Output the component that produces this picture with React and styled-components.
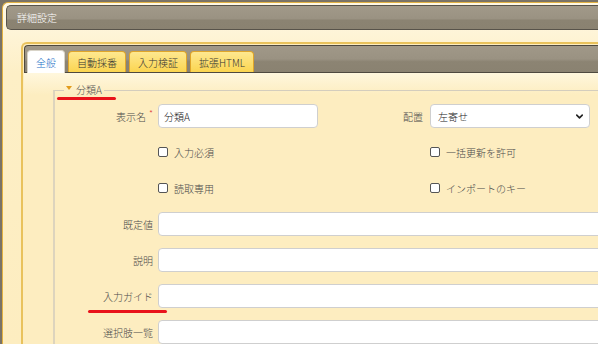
import React from 'react';
import styled, { createGlobalStyle } from 'styled-components';
import { ChevronDown } from 'lucide-react';

const GlobalStyle = createGlobalStyle`
  html, body {
    margin: 0;
    padding: 0;
    background: #7a7366;
    font-family: "Noto Sans CJK JP", "Noto Sans", sans-serif;
    font-weight: 300;
  }
`;

const App = () => {
    return (
        <>
            <GlobalStyle />
            <Dialog>
                <TitleBar>詳細設定</TitleBar>
                <Content>
                    <Panel>
                        <TabBar>
                            <Tab $active>全般</Tab>
                            <Tab>自動採番</Tab>
                            <Tab>入力検証</Tab>
                            <Tab>拡張HTML</Tab>
                        </TabBar>
                        <PanelBody>
                            <Group>
                                <Legend>
                                    <Arrow />
                                    分類A
                                    <RedMark $left={-7} $right={-12} $bottom={-3} />
                                </Legend>
                                <FormGrid>
                                    <Label>
                                        表示名<Required>*</Required>
                                    </Label>
                                    <Input defaultValue="分類A" />
                                    <Label $wide>配置</Label>
                                    <SelectBox>
                                        左寄せ
                                        <ChevronDown size={11} strokeWidth={3.5} color="#222" />
                                    </SelectBox>
                                    <Spacer />

                                    <Spacer />
                                    <Check>
                                        <Box />
                                        入力必須
                                    </Check>
                                    <Spacer />
                                    <Check>
                                        <Box />
                                        一括更新を許可
                                    </Check>
                                    <Spacer />

                                    <Spacer />
                                    <Check>
                                        <Box />
                                        読取専用
                                    </Check>
                                    <Spacer />
                                    <Check>
                                        <Box />
                                        インポートのキー
                                    </Check>
                                    <Spacer />

                                    <Label>既定値</Label>
                                    <Input $full />

                                    <Label>説明</Label>
                                    <Input $full />

                                    <Label>
                                        <Marked>
                                            入力ガイド
                                            <RedMark $left={-15} $right={-14} $bottom={-9} />
                                        </Marked>
                                    </Label>
                                    <Input $full />

                                    <Label>選択肢一覧</Label>
                                    <Input $full />
                                </FormGrid>
                            </Group>
                        </PanelBody>
                    </Panel>
                </Content>
            </Dialog>
        </>
    );
};

export default App;

// the dialog is cut off by the window on the right and at the bottom
const Dialog = styled.div`
    box-sizing: border-box;
    width: 596px;
    height: 342px;
    overflow: hidden;
    margin: 2px 0 0 2px;
    padding: 2px 0 0 3px;
    border: 1px solid #e2b142;
    border-right: none;
    border-bottom: none;
    border-radius: 6px 0 0 0;
    background: linear-gradient(#fff8e4 0, #fdefc6 70px, #fdedc0 100%);
`;

const TitleBar = styled.div`
    width: 700px;
    height: 23px;
    display: flex;
    align-items: center;
    padding-left: 10px;
    border: 1px solid #58534a;
    border-right: none;
    border-radius: 5px 0 0 5px;
    background: linear-gradient(#a19989 0%, #9a9282 55%, #8b8372 62%, #8a8271 100%);
    color: #fff;
    font-size: 10px;
`;

const Content = styled.div`
    width: 700px;
    padding: 12px 0 0 15px;
`;

const Panel = styled.div`
    padding: 1px 0 0 1px;
    border: 2px solid #e9c25c;
    border-right: none;
    border-bottom: none;
    border-radius: 6px 0 0 0;
    background: #fdedc0;
`;

const TabBar = styled.div`
    height: 22px;
    display: flex;
    align-items: flex-end;
    gap: 3px;
    padding: 4px 0 0 2px;
    border: 1px solid #4e493f;
    border-right: none;
    border-radius: 4px 0 0 0;
    background: linear-gradient(#a09888 0%, #9a9282 50%, #8c8473 60%, #8a8271 100%);
`;

const Tab = styled.div`
    height: ${p => (p.$active ? '22px' : '20px')};
    margin-bottom: ${p => (p.$active ? '-1px' : '0')};
    display: flex;
    align-items: center;
    padding: 0 8px;
    border: 1px solid ${p => (p.$active ? '#d9d4c8' : '#e0a62a')};
    border-bottom: none;
    border-radius: 4px 4px 0 0;
    background: ${p => (p.$active ? '#fff' : 'linear-gradient(#fee890, #fbd550)')};
    color: ${p => (p.$active ? '#1b6fc6' : '#333')};
    font-size: 10px;
    position: relative;
`;

const PanelBody = styled.div`
    padding: 10px 0 0 29px;
    background: linear-gradient(#fff7dd 0, #fdedc0 22px);
`;

const Group = styled.fieldset`
    margin: 0;
    padding: 0 0 20px 0;
    border: none;
    border-top: 1px solid #d4cdbd;
    border-left: 2px solid #ddd4bd;
`;

const Legend = styled.legend`
    position: relative;
    margin-left: 9px;
    padding: 0 2px;
    display: flex;
    align-items: center;
    gap: 4px;
    color: #555;
    font-size: 10px;
    line-height: 14px;
`;

const Arrow = styled.span`
    width: 0;
    height: 0;
    margin-top: -5px;
    border-left: 3px solid transparent;
    border-right: 3px solid transparent;
    border-top: 4px solid #e29b1c;
`;

const RedMark = styled.span`
    position: absolute;
    left: ${p => p.$left}px;
    right: ${p => p.$right}px;
    bottom: ${p => p.$bottom}px;
    height: 3px;
    border-radius: 2px;
    background: #e9131b;
`;

const FormGrid = styled.div`
    display: grid;
    grid-template-columns: 103px 160px 112px 160px 1fr;
    grid-auto-rows: 24px;
    row-gap: 12px;
    padding-top: 7px;
`;

const Label = styled.div`
    display: flex;
    align-items: center;
    justify-content: flex-end;
    padding-right: ${p => (p.$wide ? '7px' : '5px')};
    color: #4a4a4a;
    font-size: 10px;
`;

const Marked = styled.span`
    position: relative;
`;

const Required = styled.span`
    margin: -5px 0 0 3px;
    color: #e04040;
    font-size: 9px;
`;

const Input = styled.input`
    grid-column: ${p => (p.$full ? '2 / -1' : 'auto')};
    box-sizing: border-box;
    width: 100%;
    height: 24px;
    padding: 0 5px;
    border: 1px solid #cfcfcf;
    border-radius: 4px;
    background: #fff;
    color: #222;
    font-family: inherit;
    font-weight: 300;
    font-size: 10px;
    outline: none;
`;

const SelectBox = styled.div`
    box-sizing: border-box;
    height: 24px;
    display: flex;
    align-items: center;
    justify-content: space-between;
    padding: 0 4px 0 7px;
    border: 1px solid #cfcfcf;
    border-radius: 4px;
    background: #fff;
    color: #222;
    font-size: 10px;
`;

const Check = styled.label`
    display: flex;
    align-items: center;
    gap: 6px;
    color: #4a4a4a;
    font-size: 10px;
`;

const Box = styled.span`
    box-sizing: border-box;
    width: 10px;
    height: 10px;
    border: 1px solid #555;
    border-radius: 2px;
    background: #fff;
`;

const Spacer = styled.div``;
